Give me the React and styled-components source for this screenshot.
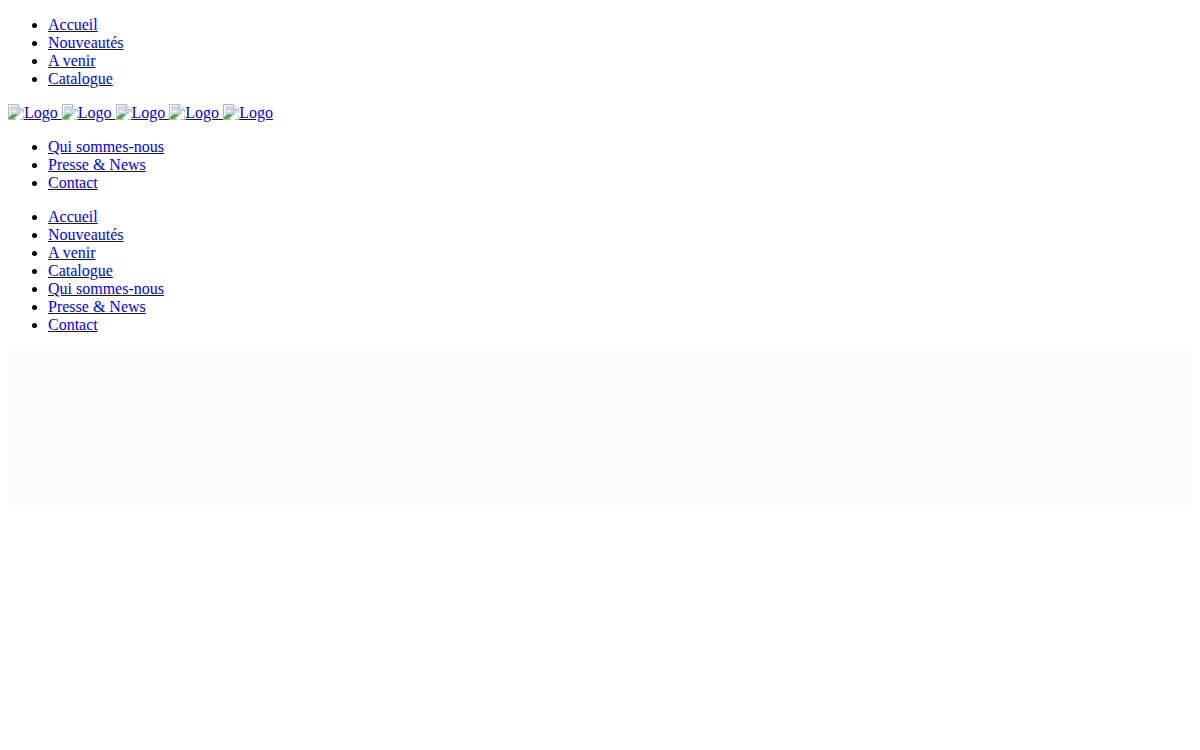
import React from "react";
import styled, { createGlobalStyle } from "styled-components";

const GlobalStyle = createGlobalStyle`
  body {
    margin: 0 8px;
    background: #fff;
    color: #000;
    font-family: "Liberation Serif", "Times New Roman", serif;
    font-size: 16px;
  }
`;

const Menu = styled.ul`
  margin: 16px 0;
  padding-left: 40px;
  list-style: disc;
`;

const MenuLink = styled.a`
  color: #0000ee;
  text-decoration: underline;
`;

const LogoRow = styled.p`
  margin: 16px 0;
`;

const BrokenIcon = styled.svg`
  width: 16px;
  height: 16px;
  vertical-align: -2px;
`;

const Banner = styled.div`
  height: 160px;
  margin-top: 16px;
  background: #fcfcfc;
`;

const mainLinks = ["Accueil", "Nouveautés", "A venir", "Catalogue"];
const infoLinks = ["Qui sommes-nous", "Presse & News", "Contact"];
const logos = [1, 2, 3, 4, 5];

// chrome's broken image icon
const BrokenImage = () => (
  <BrokenIcon viewBox="0 0 16 16">
    <path d="M.5.5H10.5L15.5 5.5V15.5H.5Z" fill="#fff" stroke="#b4b4b4" />
    <path d="M2 2H10V6H14V8L8 14H2Z" fill="#cbd8ea" />
    <path d="M3.5 6.5H7.5V8H3.5Z" fill="#f4f7fb" />
    <path d="M1 15V13C3.5 10.5 6 9.5 8.5 10.5L12 8 5.5 15Z" fill="#5aa845" />
    <path d="M10.5.5V5.5H15.5" fill="#f4f4f4" stroke="#b4b4b4" />
    <path d="M7.5 16 16 8V11L11.5 16Z" fill="#fff" />
  </BrokenIcon>
);

const LinkList = ({ items }) => (
  <Menu>
    {items.map((label) => (
      <li key={label}>
        <MenuLink href="#">{label}</MenuLink>
      </li>
    ))}
  </Menu>
);

const App = () => {
  return (
    <>
      <GlobalStyle />
      <LinkList items={mainLinks} />
      <LogoRow>
        {logos.map((n) => (
          <React.Fragment key={n}>
            <MenuLink href="#">
              <BrokenImage />
              {"Logo "}
            </MenuLink>{" "}
          </React.Fragment>
        ))}
      </LogoRow>
      <LinkList items={infoLinks} />
      <LinkList items={[...mainLinks, ...infoLinks]} />
      <Banner />
    </>
  );
};

export default App;
